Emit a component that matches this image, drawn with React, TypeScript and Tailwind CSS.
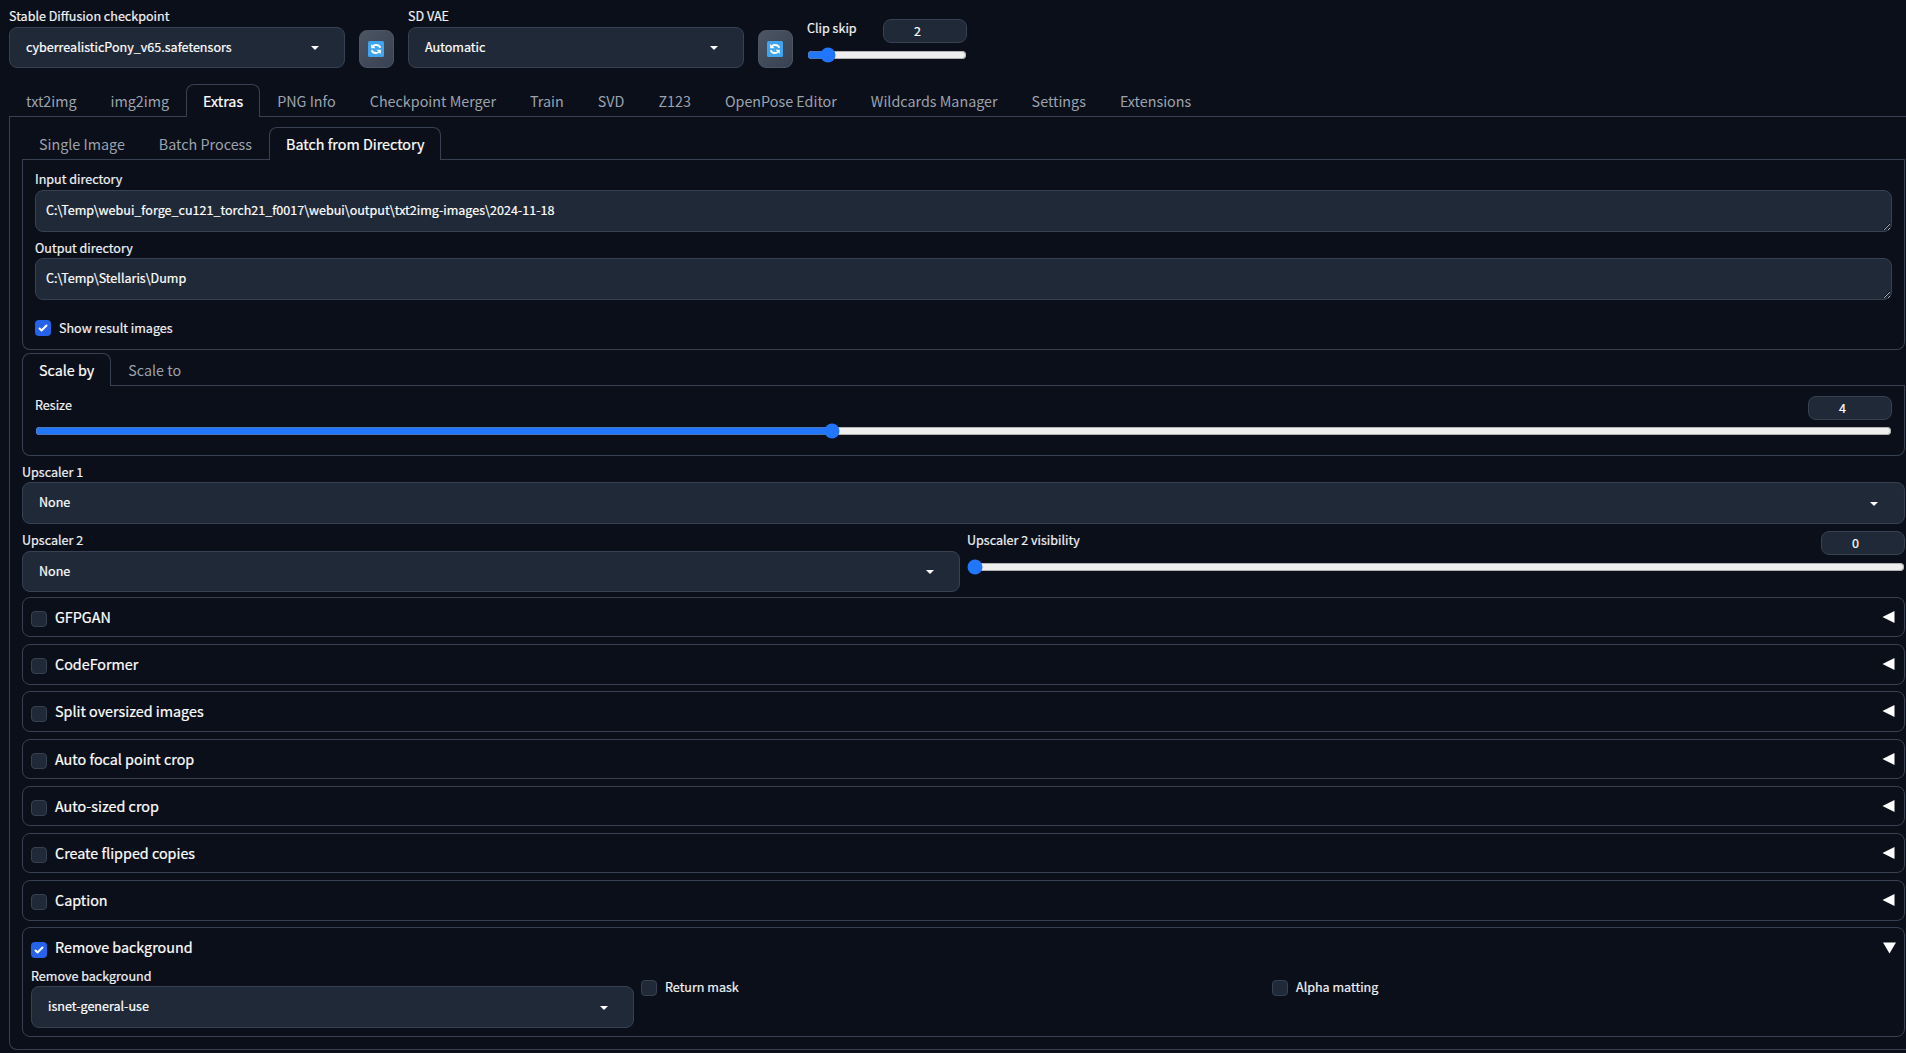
import React, { useState } from 'react';

const MAIN_TABS = [
  'txt2img',
  'img2img',
  'Extras',
  'PNG Info',
  'Checkpoint Merger',
  'Train',
  'SVD',
  'Z123',
  'OpenPose Editor',
  'Wildcards Manager',
  'Settings',
  'Extensions',
];
const INPUT_TABS = ['Single Image', 'Batch Process', 'Batch from Directory'];
const SCALE_TABS = ['Scale by', 'Scale to'];
const SECTIONS = [
  'GFPGAN',
  'CodeFormer',
  'Split oversized images',
  'Auto focal point crop',
  'Auto-sized crop',
  'Create flipped copies',
  'Caption',
];

const Tabs = ({ items, initial }: { items: string[]; initial: string }) => {
  const [active, setActive] = useState(initial);
  return (
    <div className="flex h-[33px] border-b border-[#374151]">
      {items.map((item) => (
        <button
          key={item}
          onClick={() => setActive(item)}
          className={
            item === active
              ? 'h-[33px] shrink-0 rounded-t-lg border border-b-0 border-[#374151] bg-[#0b0f19] px-4 text-[14.33px] leading-[32px] text-white'
              : 'h-[33px] shrink-0 border border-b-0 border-transparent px-4 text-[14.33px] leading-[32px] text-[#9ca3af] [-webkit-text-stroke:0px]'
          }
        >
          {item}
        </button>
      ))}
    </div>
  );
};

const Label = ({ children, short = false }: { children: React.ReactNode; short?: boolean }) => (
  <div
    className={
      short
        ? 'h-5 text-[12.56px] leading-[19px] whitespace-nowrap text-[#f0f2f5]'
        : 'h-[21px] text-[12.56px] leading-[19px] whitespace-nowrap text-[#f0f2f5]'
    }
  >
    {children}
  </div>
);

const Dropdown = ({ value, wide = false }: { value: string; wide?: boolean }) => (
  <div
    className={
      wide
        ? 'flex h-full items-center justify-between rounded-lg border border-[#374151] bg-[#1f2937] pr-[21px] pb-px pl-4 text-[12.56px] text-white'
        : 'flex h-full items-center justify-between rounded-lg border border-[#374151] bg-[#1f2937] pr-5 pb-px pl-4 text-[12.56px] text-white'
    }
  >
    <span>{value}</span>
    <svg width="18" height="18" viewBox="0 0 18 18" fill="#fff">
      <path d="M5 8l4 4 4-4z" />
    </svg>
  </div>
);

const RefreshButton = () => (
  <button className="mt-[30px] flex h-[38px] w-[35px] items-center justify-center rounded-lg border border-[#4b5563] bg-linear-to-br from-[#4b5563] to-[#374151] pr-px">
    <svg width="16" height="16" viewBox="0 0 16 16">
      <rect width="16" height="16" rx="1.5" fill="#40a5ee" />
      <path
        d="M12.200 6.800c-.4-1.800-2-2.800-4.200-2.800-1.200 0-2.100.4-2.900 1.100M3.800 9.200c.4 1.800 2 2.800 4.200 2.800 1.200 0 2.100-.4 2.900-1.100"
        fill="none"
        stroke="#fff"
        strokeWidth="1.900"
      />
      <path d="M3.200 2.900v4.400h4.400zM12.800 13.100V8.700H8.400z" fill="#fff" />
    </svg>
  </button>
);

const Checkbox = ({ initial = false }: { initial?: boolean }) => {
  const [checked, setChecked] = useState(initial);
  return (
    <button
      onClick={() => setChecked(!checked)}
      className={
        checked
          ? 'block h-4 w-4 shrink-0 rounded-sm bg-[#2563eb]'
          : 'block h-4 w-4 shrink-0 rounded-sm border border-[#374151] bg-[#1f2937]'
      }
    >
      {checked && (
        <svg width="16" height="16" viewBox="0 0 16 16" fill="#fff">
          <path d="M12.207 4.793a1 1 0 010 1.414l-5 5a1 1 0 01-1.414 0l-2-2a1 1 0 011.414-1.414L6.500 9.086l4.293-4.293a1 1 0 011.414 0z" />
        </svg>
      )}
    </button>
  );
};

interface SliderProps {
  label: string;
  min: number;
  max: number;
  step?: number;
  initial: number;
  tight?: boolean;
}

const Slider = ({ label, min, max, step = 1, initial, tight = false }: SliderProps) => {
  const [value, setValue] = useState(initial);
  return (
    <div>
      <div className="flex h-6 justify-between">
        <span className="text-[12.56px] leading-[18px] whitespace-nowrap text-[#f0f2f5]">{label}</span>
        <div className="h-6 w-[84px] rounded-lg border border-[#374151] bg-[#1f2937] pr-[15px] text-center text-[12.56px] leading-[21px] text-white">
          {value}
        </div>
      </div>
      <input
        type="range"
        min={min}
        max={max}
        step={step}
        value={value}
        onChange={(e) => setValue(parseFloat(e.target.value))}
        className={tight ? 'mt-[3px] block h-4 w-full accent-[#2176ff]' : 'mt-1 block h-4 w-full accent-[#2176ff]'}
      />
    </div>
  );
};

const Directory = ({ label, value, short = false }: { label: string; value: string; short?: boolean }) => (
  <div>
    <Label short={short}>{label}</Label>
    <textarea
      defaultValue={value}
      rows={1}
      className="block h-[42px] w-full resize overflow-hidden rounded-lg border border-[#374151] bg-[#1f2937] px-2.5 py-[9px] text-[12.56px] leading-[20px] text-white"
    />
  </div>
);

const SectionHeader = ({ title, open = false }: { title: string; open?: boolean }) => (
  <div className="flex h-[37px] items-start justify-between px-2">
    <div className="flex items-start gap-2">
      <div className="pt-[13.2px]">
        <Checkbox initial={open} />
      </div>
      <span className="pt-[6.95px] text-[14.33px] leading-[24px] text-white">{title}</span>
    </div>
    {open ? (
      <svg className="mt-[13.6px]" width="13" height="12" viewBox="0 0 13 12" fill="#fff">
        <path d="M0 0.500h13L6.500 11.500z" />
      </svg>
    ) : (
      <svg className="mt-[13px] mr-px" width="13" height="12" viewBox="0 0 13 12" fill="#fff">
        <path d="M12.500 0v12L0.500 6z" />
      </svg>
    )}
  </div>
);

export default function App() {
  return (
    <div className="h-[1053px] w-[1906px] overflow-hidden bg-[#0b0f19] pl-[9px] font-['Noto_Sans_CJK_SC','Noto_Sans',sans-serif] [-webkit-text-stroke:0.2px]">
      <header className="flex h-[84px]">
        <div className="w-[336px] pt-1.5">
          <Label>Stable Diffusion checkpoint</Label>
          <div className="h-[41px]">
            <Dropdown value="cyberrealisticPony_v65.safetensors" />
          </div>
        </div>
        <div className="mr-[14px] ml-[14px]">
          <RefreshButton />
        </div>
        <div className="w-[336px] pt-1.5">
          <Label>SD VAE</Label>
          <div className="h-[41px]">
            <Dropdown value="Automatic" />
          </div>
        </div>
        <div className="mr-[14px] ml-[14px]">
          <RefreshButton />
        </div>
        <div className="w-[160px] pt-[19px]">
          <Slider label="Clip skip" min={1} max={12} initial={2} />
        </div>
      </header>

      <Tabs items={MAIN_TABS} initial="Extras" />
      <main className="h-[933px] w-[1909px] rounded-b-lg border border-t-0 border-[#374151] pt-[10px] pl-3">
        <div className="w-[1883px]">
          <Tabs items={INPUT_TABS} initial="Batch from Directory" />
          <div className="h-[190px] rounded-b-lg border border-t-0 border-[#374151] px-3 pt-[9px]">
            <Directory
              label="Input directory"
              value="C:\Temp\webui_forge_cu121_torch21_f0017\webui\output\txt2img-images\2024-11-18"
            />
            <div className="mt-[6px]">
              <Directory label="Output directory" value="C:\Temp\Stellaris\Dump" short />
            </div>
            <div className="mt-5 flex items-center gap-2">
              <Checkbox initial />
              <span className="text-[12.56px] leading-4 text-[#f0f2f5]">Show result images</span>
            </div>
          </div>

          <div className="h-[3px]" />
          <Tabs items={SCALE_TABS} initial="Scale by" />
          <div className="h-[70px] rounded-b-lg border border-t-0 border-[#374151] px-3 pt-[10px]">
            <Slider label="Resize" min={1} max={8} step={0.05} initial={4} tight />
          </div>

          <div className="pt-[6px]">
            <Label short>Upscaler 1</Label>
            <div className="h-[42px]">
              <Dropdown value="None" wide />
            </div>
          </div>

          <div className="flex h-[73px] gap-[7px]">
            <div className="w-[938px] pt-[6px]">
              <Label>Upscaler 2</Label>
              <div className="h-[41px]">
                <Dropdown value="None" />
              </div>
            </div>
            <div className="w-[938px] pt-[7px]">
              <Slider label="Upscaler 2 visibility" min={0} max={1} step={0.001} initial={0} />
            </div>
          </div>

          <div className="flex flex-col gap-[6.8px]">
            {SECTIONS.map((title) => (
              <section key={title} className="h-[40.4px] rounded-lg border border-[#374151]">
                <SectionHeader title={title} />
              </section>
            ))}
            <section className="h-[109.6px] rounded-lg border border-[#374151]">
              <SectionHeader title="Remove background" open />
              <div className="flex items-start px-2">
                <div className="w-[603px] pt-px">
                  <Label short>Remove background</Label>
                  <div className="h-[42px]">
                    <Dropdown value="isnet-general-use" />
                  </div>
                </div>
                <div className="ml-[7px] flex w-[631px] items-start gap-2 pt-[14.6px]">
                  <Checkbox />
                  <span className="text-[12.56px] leading-[14px] text-[#f0f2f5]">Return mask</span>
                </div>
                <div className="flex items-start gap-2 pt-[14.6px]">
                  <Checkbox />
                  <span className="text-[12.56px] leading-[14px] text-[#f0f2f5]">Alpha matting</span>
                </div>
              </div>
            </section>
          </div>
        </div>
      </main>
    </div>
  );
}
